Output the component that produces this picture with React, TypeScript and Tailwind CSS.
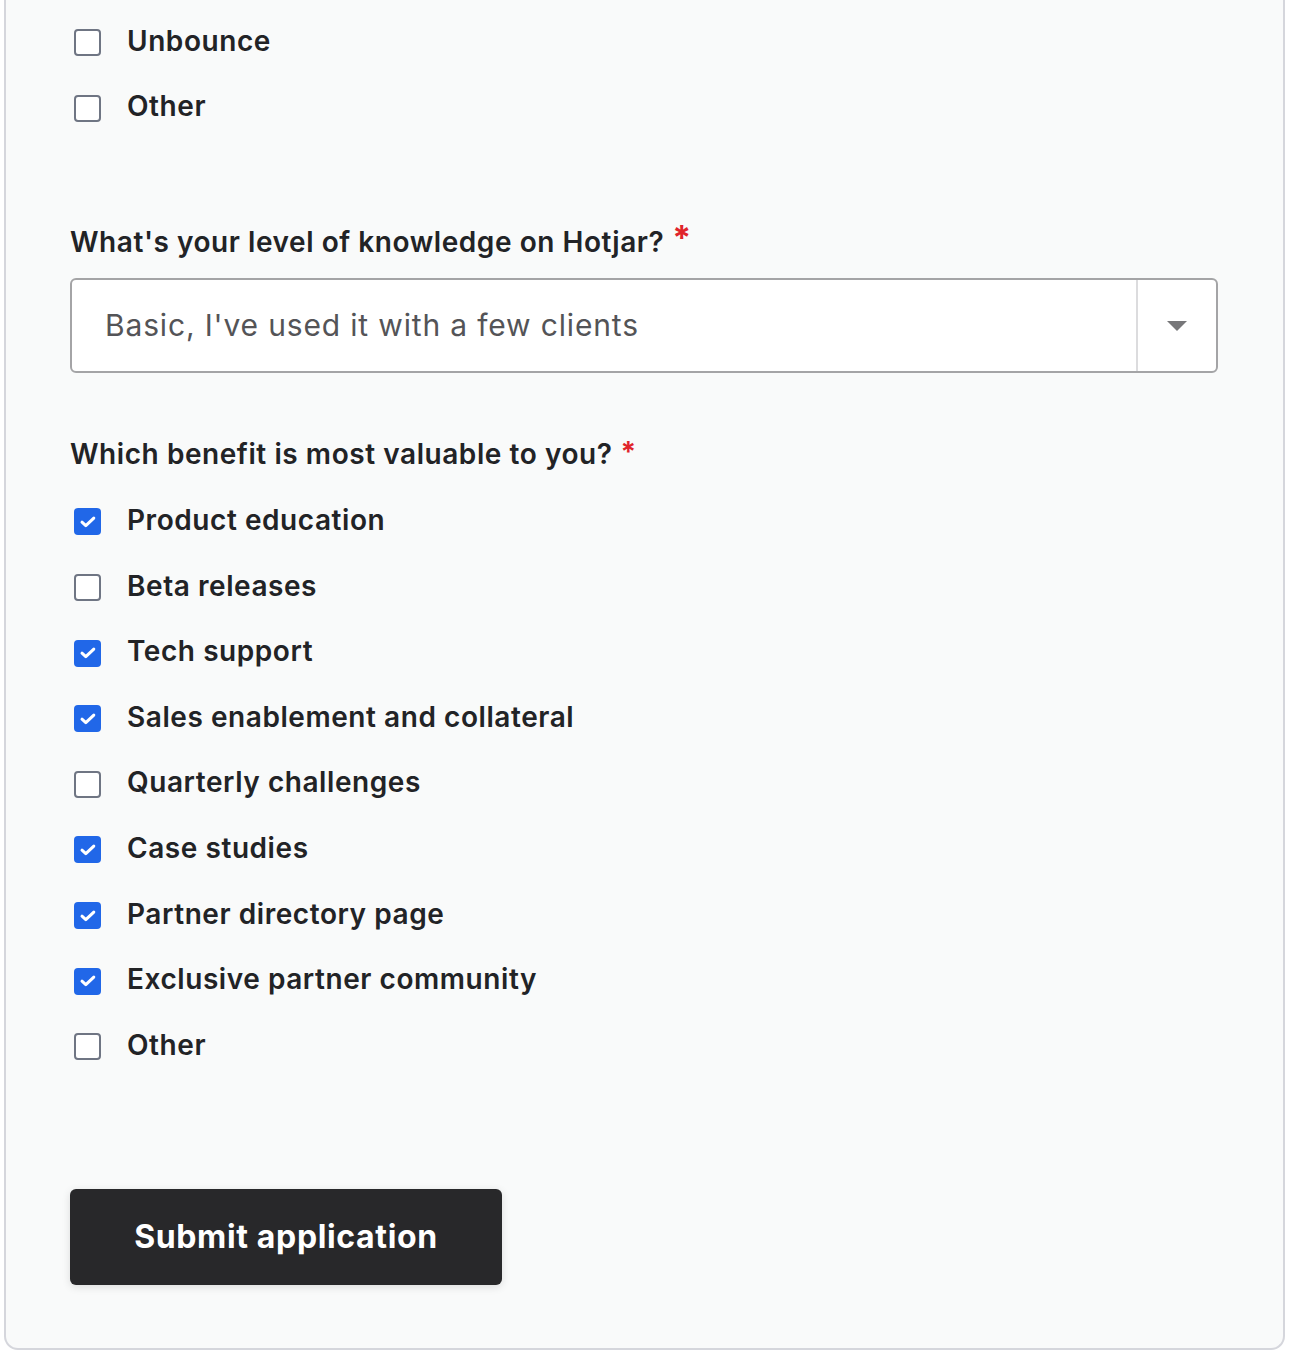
import React from "react";

const benefits = [
  { label: "Product education", checked: true },
  { label: "Beta releases", checked: false },
  { label: "Tech support", checked: true },
  { label: "Sales enablement and collateral", checked: true },
  { label: "Quarterly challenges", checked: false },
  { label: "Case studies", checked: true },
  { label: "Partner directory page", checked: true },
  { label: "Exclusive partner community", checked: true },
  { label: "Other", checked: false },
];

function Checkbox({ checked }: { checked: boolean }) {
  if (checked) {
    return (
      <span className="flex h-[27px] w-[27px] shrink-0 items-center justify-center rounded-[4px] bg-[#2167e8]">
        <svg width="18" height="18" viewBox="0 0 18 18" fill="none">
          <path
            d="M3 9.2l3.8 3.5 8-7.6"
            stroke="white"
            strokeWidth="3"
            strokeLinecap="round"
            strokeLinejoin="round"
          />
        </svg>
      </span>
    );
  }
  return (
    <span className="h-[27px] w-[27px] shrink-0 rounded-[4px] border-2 border-[#6f7583] bg-white" />
  );
}

function Option({ label, checked }: { label: string; checked: boolean }) {
  return (
    <label className="flex h-[65.6px] items-center">
      <span className="ml-[4px] mt-[4px] flex">
        <Checkbox checked={checked} />
      </span>
      <span className="ml-[26px] text-[28px] font-semibold tracking-[0.02em] text-[#222326]">
        {label}
      </span>
    </label>
  );
}

function Question({ children, big }: { children: React.ReactNode; big?: boolean }) {
  return (
    <div className="flex h-[36px] items-center text-[28px] font-semibold tracking-[0.02em] text-[#222326]">
      {children}
      {big ? (
        <span className="ml-[8px] -mt-[10px] text-[34px] font-bold text-[#e0242b]">*</span>
      ) : (
        <span className="ml-[8px] -mt-[4px] text-[28px] font-bold text-[#e0242b]">*</span>
      )}
    </div>
  );
}

export default function App() {
  return (
    <div className="min-h-[1358px] bg-white font-['Inter','Noto_Sans',sans-serif]">
      <div className="ml-[4px] w-[1281px] rounded-b-[14px] border-x-2 border-b-2 border-[#d5d6dc] bg-[#f9fafa] pb-[63px] pl-[64px] pt-[8px]">
        <div>
          <Option label="Unbounce" checked={false} />
          <Option label="Other" checked={false} />
        </div>

        <div className="mt-[85px]">
          <Question big>What's your level of knowledge on Hotjar?</Question>
          <div className="mt-[18px] flex h-[95px] w-[1148px] items-stretch rounded-[6px] border-2 border-[#a4a4a6] bg-white">
            <div className="flex flex-1 items-center pl-[33px] text-[30px] tracking-[0.028em] text-[#545457]">
              Basic, I've used it with a few clients
            </div>
            <div className="flex w-[80px] items-center justify-center border-l-2 border-[#dcdcde]">
              <svg width="22" height="12" viewBox="0 0 22 12">
                <path d="M1 1h20L11 11z" fill="#777779" />
              </svg>
            </div>
          </div>
        </div>

        <div className="mt-[63px]">
          <Question>Which benefit is most valuable to you?</Question>
          <div className="mt-[15px]">
            {benefits.map((b) => (
              <Option key={b.label} label={b.label} checked={b.checked} />
            ))}
          </div>
        </div>

        <button className="mt-[111px] flex h-[96px] w-[432px] items-center justify-center rounded-[6px] bg-[#28282a] text-[32px] font-bold tracking-[0.02em] text-white shadow-[0_2px_8px_rgba(0,0,0,0.12)]">
          Submit application
        </button>
      </div>
    </div>
  );
}
